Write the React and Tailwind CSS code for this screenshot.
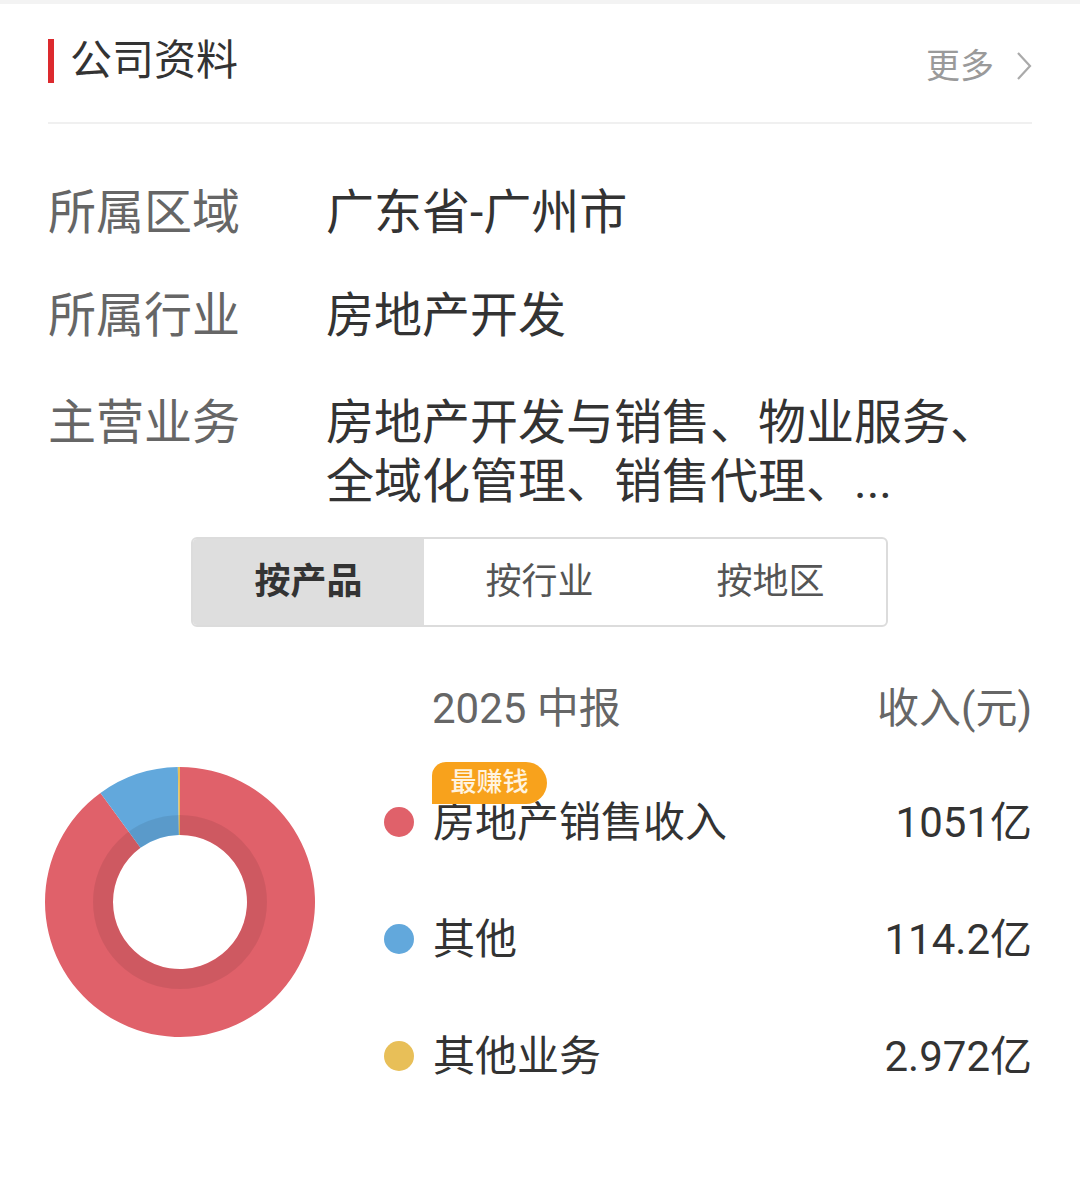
const segments = [
  { name: '房地产销售收入', value: 1051, label: '1051亿', color: '#e0616a' },
  { name: '其他', value: 114.2, label: '114.2亿', color: '#62a8dc' },
  { name: '其他业务', value: 2.972, label: '2.972亿', color: '#e8bf58' },
];

function arcPath(a0, a1, r0, r1) {
  const c = 135;
  const p = (a, r) => [c + r * Math.sin((a * Math.PI) / 180), c - r * Math.cos((a * Math.PI) / 180)];
  const [x0, y0] = p(a0, r1);
  const [x1, y1] = p(a1, r1);
  const [x2, y2] = p(a1, r0);
  const [x3, y3] = p(a0, r0);
  const large = a1 - a0 > 180 ? 1 : 0;
  return `M${x0} ${y0} A${r1} ${r1} 0 ${large} 1 ${x1} ${y1} L${x2} ${y2} A${r0} ${r0} 0 ${large} 0 ${x3} ${y3}Z`;
}

const Donut = () => {
  const total = segments.reduce((s, x) => s + x.value, 0);
  let start = 0;
  return (
    <svg width="270" height="270" viewBox="0 0 270 270">
      {segments.map((s) => {
        const sweep = (s.value / total) * 360;
        const d = arcPath(start, start + sweep, 67, 135);
        start += sweep;
        return <path key={s.name} d={d} fill={s.color} />;
      })}
      <circle cx="135" cy="135" r="77" fill="none" stroke="#000" strokeOpacity="0.08" strokeWidth="20" />
    </svg>
  );
};

const InfoRow = ({ label, lines, className }) => (
  <div className={`flex ${className}`}>
    <div className="w-[278px] shrink-0 text-[48px] leading-[59px] text-[#666]">{label}</div>
    <div className="text-[48px] leading-[59px] text-[#333]">
      {lines.map((l) => (
        <div key={l}>{l}</div>
      ))}
    </div>
  </div>
);

const App = () => {
  return (
    <div className="w-[1080px] h-[1202px] bg-white overflow-hidden font-[Roboto,'Noto_Sans_CJK_SC',sans-serif]">
      <div className="h-[4px] bg-[#f3f3f3]" />
      <div className="px-[48px]">
        <div className="h-[114px] flex items-center justify-between">
          <div className="flex items-center">
            <div className="w-[6px] h-[44px] bg-[#dc2a2e]" />
            <div className="ml-[16px] text-[42px] leading-none text-[#333]">公司资料</div>
          </div>
          <div className="pt-[9px] flex items-center text-[34px] leading-none text-[#9a9a9a]">
            <span>更多</span>
            <svg className="ml-[22px]" width="16" height="30" viewBox="0 0 16 30">
              <polyline points="2,2 14,15 2,28" fill="none" stroke="#aaa" strokeWidth="2.2" />
            </svg>
          </div>
        </div>
        <div className="mt-[4px] h-[2px] bg-[#f0f0f0]" />

        <InfoRow className="mt-[59px]" label="所属区域" lines={['广东省-广州市']} />
        <InfoRow className="mt-[44px]" label="所属行业" lines={['房地产开发']} />
        <InfoRow
          className="mt-[48px]"
          label="主营业务"
          lines={['房地产开发与销售、物业服务、', '全域化管理、销售代理、...']}
        />

        <div className="ml-[143px] mt-[26px] w-[697px] h-[90px] border-2 border-[#dcdcdc] rounded-[6px] overflow-hidden grid grid-cols-3 text-[36px]">
          <div className="bg-[#dedede] flex items-center justify-center font-bold text-[#333]">按产品</div>
          <div className="flex items-center justify-center text-[#555]">按行业</div>
          <div className="flex items-center justify-center text-[#555]">按地区</div>
        </div>

        <div className="mt-[56px] flex items-start">
          <div className="ml-[-3px] mt-[84px] w-[270px] h-[270px] shrink-0">
            <Donut />
          </div>
          <div className="ml-[69px] flex-1 flex flex-col gap-[61px]">
            <div className="h-[50px] pl-[48px] flex items-center justify-between text-[42px] text-[#666]">
              <span>2025 中报</span>
              <span>收入(元)</span>
            </div>
            {segments.map((s, i) => (
              <div key={s.name} className="h-[56px] flex items-center">
                <div className="w-[30px] h-[30px] rounded-full shrink-0" style={{ backgroundColor: s.color }} />
                <div className="relative ml-[19px] text-[42px] text-[#333]">
                  {i === 0 && (
                    <div className="absolute left-[-1px] top-[-29px] w-[115px] h-[42px] bg-[#f8a21c] rounded-tl-[14px] rounded-r-[21px] flex items-center justify-center text-[26px] text-[#fff4e0] font-medium">
                      最赚钱
                    </div>
                  )}
                  {s.name}
                </div>
                <div className="ml-auto text-[42px] text-[#333]">{s.label}</div>
              </div>
            ))}
          </div>
        </div>
      </div>
    </div>
  );
};

export default App;
